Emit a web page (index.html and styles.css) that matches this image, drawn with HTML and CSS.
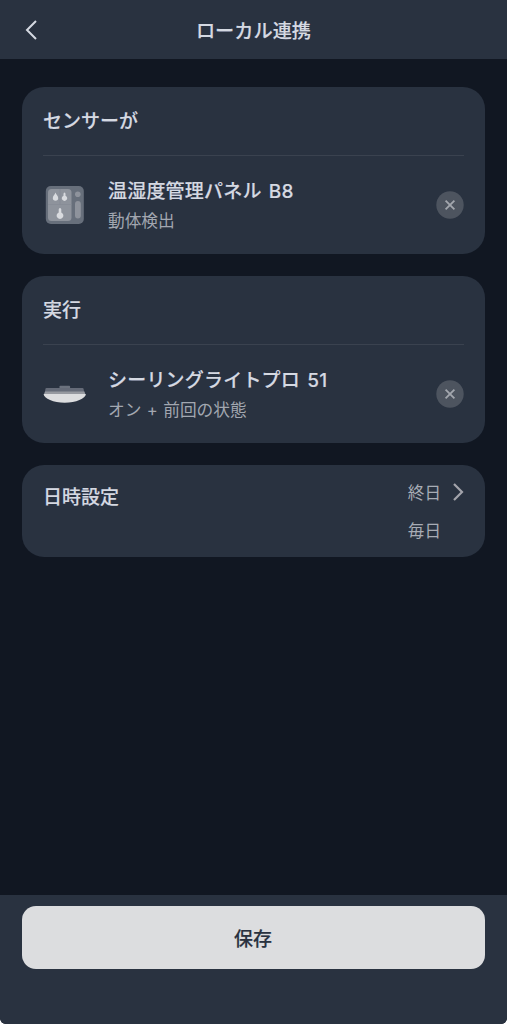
FILE: index.html
```html
<!DOCTYPE html>
<html lang="ja">
<head>
<meta charset="utf-8">
<title>ローカル連携</title>
<link rel="stylesheet" href="styles.css">
</head>
<body>
<div class="app">
  <header class="header">
    <svg class="back" viewBox="0 0 14 22"><path d="M12 2 3 11l9 9"/></svg>
    <h1 class="title">ローカル連携</h1>
  </header>
  <main class="content">
    <section class="card">
      <h2 class="card-title">センサーが</h2>
      <div class="row">
        <svg class="device" viewBox="0 0 44 44">
          <rect x="2.800" y="3" width="38" height="38" rx="5" fill="#676f7b"/>
          <rect x="5" y="6" width="23.500" height="32" rx="3.500" fill="#8e939c"/>
          <path d="M5 21.500h23.500M17 6v15.500" stroke="#858b95" stroke-width=".7"/>
          <g fill="#d9dbdf">
            <path d="M12.500 9.500c.6 1.900 2.700 3.600 2.700 5.500a2.700 2.700 0 0 1-5.400 0c0-1.900 2.100-3.600 2.700-5.500z"/>
            <path d="M21.500 9.500q1 0 1 1.500v1.700a2.700 2.700 0 1 1-2 0V11q0-1.500 1-1.500z"/>
            <path d="M17 25q1.300 0 1.300 1.500v2.900a3.400 3.400 0 1 1-2.600 0v-2.900q0-1.500 1.300-1.500z"/>
          </g>
          <circle cx="34.800" cy="11.300" r="2.800" fill="#8e939c"/>
          <rect x="32" y="18" width="5.800" height="17.500" rx="2.900" fill="#8e939c"/>
        </svg>
        <div class="info">
          <div class="name">温湿度管理パネル B8</div>
          <div class="detail">動体検出</div>
        </div>
        <svg class="remove" viewBox="0 0 28 28"><circle cx="14" cy="14" r="13.700"/><path d="m9.600 9.600 8.800 8.800m0-8.800-8.800 8.800"/></svg>
      </div>
    </section>
    <section class="card">
      <h2 class="card-title">実行</h2>
      <div class="row">
        <svg class="device" viewBox="0 0 44 44">
          <path d="M16.500 16v-1.500q0-.8.800-.8h9q.8 0 .8.800V16z" fill="#6b727e"/>
          <path d="M3.500 16h36q1 0 1.100 1l.5 3H2l.4-3q.1-1 1.100-1z" fill="#656b78"/>
          <path d="M2 19.500h39.500l.8 2.700H1z" fill="#9699a0"/>
          <path d="M.6 22h42.300c-.3 4.500-10 8.700-21.200 8.700S.9 26.500.6 22z" fill="#dcdddf"/>
        </svg>
        <div class="info">
          <div class="name">シーリングライトプロ 51</div>
          <div class="detail">オン + 前回の状態</div>
        </div>
        <svg class="remove" viewBox="0 0 28 28"><circle cx="14" cy="14" r="13.700"/><path d="m9.600 9.600 8.800 8.800m0-8.800-8.800 8.800"/></svg>
      </div>
    </section>
    <section class="card schedule">
      <h2 class="schedule-title">日時設定</h2>
      <div class="schedule-values"><div>終日</div><div>毎日</div></div>
      <svg class="forward" viewBox="0 0 12 20"><path d="m2 2 8 8-8 8"/></svg>
    </section>
  </main>
  <footer class="footer"><button class="save">保存</button></footer>
</div>
</body>
</html>
```
FILE: styles.css
```css
* { box-sizing: border-box; }
body {
  margin: 0;
  background: #fff;
  font-family: Inter, "Noto Sans CJK JP", sans-serif;
  color: #d5d9e2;
}
h1, h2 { margin: 0; font-size: 19px; font-weight: 500; }
h1, h2, .name, .save { -webkit-text-stroke: 0.15px currentColor; }
svg { display: block; flex: none; }
.app {
  display: flex;
  flex-direction: column;
  height: 1024px;
  background: #111722;
  border-radius: 0 0 6px 6px;
  overflow: hidden;
}
.header {
  display: grid;
  grid-template-columns: 60px 1fr 60px;
  align-items: center;
  height: 59px;
  background: #293240;
}
.title { font-size: 19.2px; line-height: 28px; padding-top: 2px; text-align: center; }
.back {
  width: 14px;
  height: 22px;
  margin-left: 24px;
  fill: none;
  stroke: #d5d9e2;
  stroke-width: 2;
}
.content {
  flex: 1;
  display: flex;
  flex-direction: column;
  gap: 22px;
  padding: 28px 22px 0;
}
.card {
  height: 167px;
  padding: 0 21px;
  border-radius: 22px;
  background: #293240;
}
.card-title {
  height: 69px;
  line-height: 69px;
  border-bottom: 1px solid #3a424f;
}
.row { display: flex; align-items: center; height: 98px; }
.device { width: 44px; height: 44px; }
.info { flex: 1; margin-left: 21px; padding-top: 2px; }
.name {
  font-size: 19px;
  font-weight: 500;
  line-height: 30px;
  letter-spacing: 0.2px;
  word-spacing: 2px;
}
.detail {
  font-size: 16.700px;
  line-height: 28px;
  word-spacing: 0.700px;
  color: #a2a7b0;
}
.remove { width: 28px; height: 28px; stroke: #a3a7ae; stroke-width: 1.800; }
.remove circle { fill: #4d545f; stroke: none; }
.schedule { display: flex; align-items: flex-start; height: 92px; }
.schedule-title { flex: 1; line-height: 28px; margin-top: 19px; }
.schedule-values {
  font-size: 16.600px;
  line-height: 38px;
  margin-top: 9px;
  color: #a7acb5;
}
.forward {
  width: 12px;
  height: 20px;
  margin: 17px 0 0 11px;
  fill: none;
  stroke: #a3a4ab;
  stroke-width: 2.200;
}
.footer { height: 129px; padding: 11px 22px; background: #293240; }
.save {
  display: block;
  width: 100%;
  height: 63px;
  padding: 0 1px 0 0;
  border: 0;
  border-radius: 14px;
  background: #dcdddf;
  color: #293240;
  font: 500 19px "Noto Sans CJK JP", sans-serif;
}
```
